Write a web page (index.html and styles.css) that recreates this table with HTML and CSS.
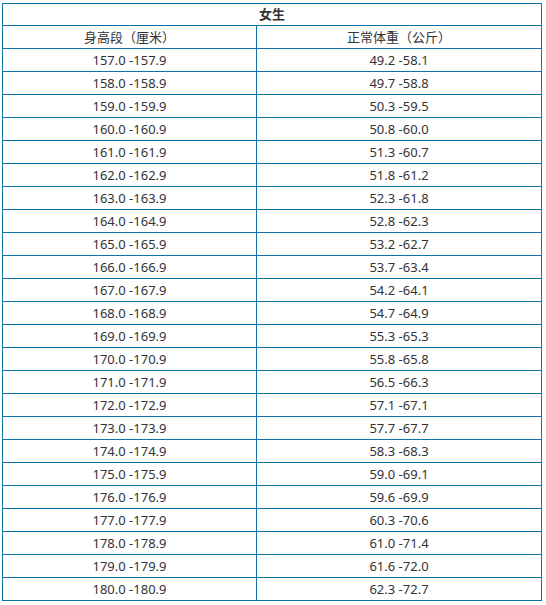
FILE: index.html
```html
<!DOCTYPE html>
<html lang="zh">
<head>
<meta charset="utf-8">
<link rel="stylesheet" href="styles.css">
</head>
<body>
<table class="weight-table">
<colgroup><col class="col-height"><col class="col-weight"></colgroup>
<thead>
<tr class="title-row"><th colspan="2">女生</th></tr>
<tr class="head-row"><td>身高段（厘米）</td><td>正常体重（公斤）</td></tr>
</thead>
<tbody>
<tr><td>157.0 -157.9</td><td>49.2 -58.1</td></tr>
<tr><td>158.0 -158.9</td><td>49.7 -58.8</td></tr>
<tr><td>159.0 -159.9</td><td>50.3 -59.5</td></tr>
<tr><td>160.0 -160.9</td><td>50.8 -60.0</td></tr>
<tr><td>161.0 -161.9</td><td>51.3 -60.7</td></tr>
<tr><td>162.0 -162.9</td><td>51.8 -61.2</td></tr>
<tr><td>163.0 -163.9</td><td>52.3 -61.8</td></tr>
<tr><td>164.0 -164.9</td><td>52.8 -62.3</td></tr>
<tr><td>165.0 -165.9</td><td>53.2 -62.7</td></tr>
<tr><td>166.0 -166.9</td><td>53.7 -63.4</td></tr>
<tr><td>167.0 -167.9</td><td>54.2 -64.1</td></tr>
<tr><td>168.0 -168.9</td><td>54.7 -64.9</td></tr>
<tr><td>169.0 -169.9</td><td>55.3 -65.3</td></tr>
<tr><td>170.0 -170.9</td><td>55.8 -65.8</td></tr>
<tr><td>171.0 -171.9</td><td>56.5 -66.3</td></tr>
<tr><td>172.0 -172.9</td><td>57.1 -67.1</td></tr>
<tr><td>173.0 -173.9</td><td>57.7 -67.7</td></tr>
<tr><td>174.0 -174.9</td><td>58.3 -68.3</td></tr>
<tr><td>175.0 -175.9</td><td>59.0 -69.1</td></tr>
<tr><td>176.0 -176.9</td><td>59.6 -69.9</td></tr>
<tr><td>177.0 -177.9</td><td>60.3 -70.6</td></tr>
<tr><td>178.0 -178.9</td><td>61.0 -71.4</td></tr>
<tr><td>179.0 -179.9</td><td>61.6 -72.0</td></tr>
<tr><td>180.0 -180.9</td><td>62.3 -72.7</td></tr>
</tbody>
</table>
</body>
</html>
```
FILE: styles.css
```css
html, body {
  margin: 0;
  background: #fff;
}
body {
  padding: 3px 0 0 2px;
  font-family: "Noto Sans", "Noto Sans CJK SC", sans-serif;
  font-size: 13px;
  color: #333;
}
.weight-table {
  width: 540px;
  border-collapse: collapse;
  border: 1px solid #0e73a8;
  table-layout: fixed;
}
.col-height {
  width: 254px;
}
.weight-table th,
.weight-table td {
  border: 1px solid #0e73a8;
  padding: 0;
  text-align: center;
  height: 22px;
  line-height: 22px;
  font-weight: normal;
}
.weight-table .title-row th {
  height: 21px;
  line-height: 21px;
  font-weight: bold;
}
```
